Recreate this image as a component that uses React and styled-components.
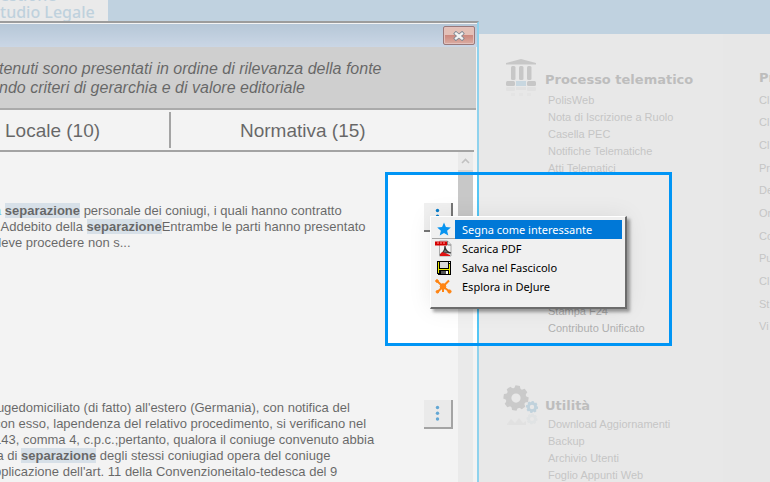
import React from "react";
import styled, { createGlobalStyle } from "styled-components";

const Global = createGlobalStyle`
  * { box-sizing: border-box; }
  body { margin: 0; overflow: hidden; font-family: "Liberation Sans", Arial, sans-serif; }
  button { font: inherit; border: 0; margin: 0; padding: 0; background: none; cursor: pointer; }
`;

const Desktop = styled.div`
  position: relative;
  min-height: 100vh;
  overflow: hidden;
  display: flex;
  flex-direction: column;
  background: #ececec;
`;

const Header = styled.header`
  height: 34px;
  flex: none;
  background: #a7c6de;
`;

const Logo = styled.div`
  width: 108px;
  height: 34px;
  overflow: hidden;
  display: flex;
  flex-direction: column;
  justify-content: flex-end;
  padding-bottom: 13px;
  background: #f0f0f0;
  color: #a5c5d9;
  font: 500 16px/17px "Noto Sans", sans-serif;
  white-space: nowrap;
`;

const Nav = styled.nav`
  flex: 1;
  display: flex;
  padding-left: 503px;
`;

const MainColumn = styled.div`
  width: 220px;
  flex: none;
  display: flex;
  flex-direction: column;
  gap: 47px;
  padding-top: 24px;
`;

const SideColumn = styled.div`
  flex: 1;
  min-width: 0;
  overflow: hidden;
  padding: 34px 0 0 36px;
  background: #eaeaea;
`;

const Section = styled.section`
  display: flex;
  align-items: flex-start;
`;

const SectionIcon = styled.svg`
  flex: none;
  width: 42px;
  height: 44px;
  overflow: visible;
`;

const SectionTitle = styled.h2`
  margin: 0;
  padding-top: ${(p) => p.$top || 0}px;
  color: #a3a3a3;
  font: bold 13px/20px "DejaVu Sans", sans-serif;
  white-space: nowrap;
`;

const Links = styled.div`
  display: flex;
  flex-direction: column;
  align-items: flex-start;
  padding-left: ${(p) => p.$indent || 0}px;
  margin-top: ${(p) => p.$gap || 0}px;
`;

const NavLink = styled.a`
  color: #b0b0b0;
  font-size: 11px;
  line-height: 17px;
  text-decoration: none;
  white-space: nowrap;
`;

const SideLinks = styled.div`
  display: grid;
  grid-auto-rows: 1fr;
  align-items: center;
  height: 249px;
  margin-top: 1px;
`;

const Window = styled.section`
  position: absolute;
  left: -6px;
  top: 21px;
  bottom: 0;
  width: 485px;
  display: flex;
  flex-direction: column;
  background: #fff;
  border-top: 2px solid #6a6a6a;
  border-right: 2px solid #53c6f5;
  overflow: hidden;
`;

const TitleBar = styled.div`
  height: 24px;
  flex: none;
  display: flex;
  justify-content: flex-end;
  padding: 2px 2px 0 0;
  border-top: 1px solid #fff;
  background: linear-gradient(#96b3cf, #b9cee8);
`;

const CloseButton = styled.button`
  width: 32px;
  height: 19px;
  display: grid;
  place-items: center;
  border: 1px solid #642d30;
  border-radius: 2px;
  box-shadow: inset 0 0 0 1px #e3aaa2;
  background: linear-gradient(#e3a898 0 45%, #bd4937 50%, #d48675);
`;

const Notice = styled.p`
  margin: 0 1px 0 0;
  padding: 12px 5px 10px;
  height: 63px;
  background: #c1c1c1;
  border-bottom: 2px solid #828282;
  color: #0d0d0d;
  font-size: 16px;
  font-style: italic;
  line-height: 19px;
  white-space: nowrap;
`;

const Tabs = styled.div`
  display: flex;
  height: 42px;
  margin-right: 3px;
  padding: 2px 0;
  border-bottom: 2px solid #767676;
`;

const Tab = styled.button`
  width: ${(p) => p.$width || "auto"};
  flex: ${(p) => (p.$width ? "none" : 1)};
  padding-left: ${(p) => p.$pad}px;
  border-right: ${(p) => (p.$width ? "2px solid #777" : "0")};
  color: #0d0d0d;
  font-size: 19px;
  line-height: 38px;
  text-align: left;
`;

const Body = styled.div`
  flex: 1;
  min-height: 0;
  display: flex;
  margin-right: 4px;
`;

const Results = styled.div`
  flex: 1;
  min-width: 0;
  padding-top: 51px;
`;

const Result = styled.article`
  display: flex;
  justify-content: space-between;
  align-items: flex-start;
  height: 197px;
  padding-right: 5px;
`;

const Excerpt = styled.p`
  margin: 0;
  color: #0d0d0d;
  font-size: 13px;
  line-height: 16px;
  white-space: nowrap;
`;

const Mark = styled.mark`
  background: #cfdeec;
  color: #0d0d0d;
  font-weight: bold;
`;

const Source = styled.span`
  color: #2ab0f0;
`;

const MoreButton = styled.button`
  width: 29px;
  height: 29px;
  flex: none;
  display: grid;
  place-items: center;
  background: #f0f0f0;
  border-right: 2px solid #777;
  border-bottom: 2px solid #777;
`;

const Scrollbar = styled.div`
  width: 15px;
  flex: none;
  background: #f0f0f0;
`;

const ScrollUp = styled.button`
  display: grid;
  place-items: center;
  width: 15px;
  height: 18px;
`;

const Thumb = styled.div`
  height: 96px;
  background: #c8c8c8;
`;

const Spotlight = styled.div`
  position: absolute;
  left: 385px;
  top: 172px;
  width: 287px;
  height: 174px;
  border: 3px solid #0095f5;
  box-shadow: 0 0 0 2000px rgba(226, 226, 226, 0.42);
  pointer-events: none;
`;

const Menu = styled.div`
  position: absolute;
  left: 430px;
  top: 216px;
  width: 197px;
  height: 93px;
  padding: 3px 3px 0 1px;
  background: #f0f0f0;
  border: 1px solid #fff;
  border-right: 2px solid #6c6c6c;
  border-bottom: 2px solid #6c6c6c;
  box-shadow: 3px 3px 3px rgba(0, 0, 0, 0.35), 0 0 22px rgba(0, 0, 0, 0.08);
`;

const MenuItem = styled.button`
  display: flex;
  align-items: center;
  width: 100%;
  height: 19px;
  color: #000;
  font: 11px/19px "Noto Sans", sans-serif;
  text-align: left;
  white-space: nowrap;
`;

const MenuIcon = styled.span`
  width: 23px;
  height: 19px;
  flex: none;
  display: grid;
  place-items: center;
  border-bottom: ${(p) => (p.$active ? "1px solid #a8a8a8" : "0")};
`;

const MenuLabel = styled.span`
  flex: 1;
  height: 19px;
  padding-left: 7px;
  background: ${(p) => (p.$active ? "#0078d7" : "transparent")};
  color: ${(p) => (p.$active ? "#fff" : "#000")};
`;

const Dots = () => (
  <svg width="5" height="17" viewBox="0 0 5 17" fill="#087dca">
    <circle cx="2.5" cy="2.5" r="1.7" />
    <circle cx="2.5" cy="8.2" r="1.7" />
    <circle cx="2.5" cy="14" r="1.7" />
  </svg>
);

const TempleShape = () => (
  <>
    <path d="M3 5.500V4L18 0l15 4v1.500z" />
    <rect x="8" y="7" width="4.500" height="14" rx="1.500" />
    <rect x="16" y="7" width="4.500" height="14" rx="1.500" />
    <rect x="24" y="7" width="4.500" height="14" rx="1.500" />
    <rect x="3" y="22" width="9" height="5" rx="1.500" />
    <rect x="24" y="22" width="9" height="5" rx="1.500" />
    <rect x="13" y="22" width="10" height="5" fill="#b5cfdf" />
  </>
);

const Temple = () => (
  <SectionIcon viewBox="0 0 42 44" fill="#b4b4b4">
    <g transform="translate(0 1)"><TempleShape /></g>
    <g opacity=".2">
      <rect x="3" y="29" width="9" height="4" rx="1" />
      <rect x="13" y="29" width="10" height="3" />
      <rect x="24" y="29" width="9" height="4" rx="1" />
      <path d="M8 35h4v3H8zM16 35h4v3h-4zM24 35h4v3h-4z" opacity=".5" />
    </g>
  </SectionIcon>
);

const Cog = ({ x, y, r, color }) => (
  <g transform={`translate(${x} ${y})`}>
    <circle r={r * 0.6} fill="none" stroke={color} strokeWidth={r * 0.46} />
    {[0, 45, 90, 135, 180, 225, 270, 315].map((a) => (
      <path
        key={a}
        transform={`rotate(${a + 8}) scale(${r / 12.5})`}
        d="M-3.300 -9L-2.200 -12.500H2.200L3.300 -9z"
        fill={color}
      />
    ))}
  </g>
);

const Gears = () => (
  <SectionIcon viewBox="0 0 42 44">
    <Cog x={13} y={14} r={12.5} color="#b8b8b8" />
    <Cog x={29} y={23} r={6} color="#a7c6d8" />
    <g opacity=".12">
      <Cog x={29} y={35} r={5.5} color="#8aa5b5" />
      <path d="M4 40l4-5 4 4 4-5 4 5 3-2v4H4z" fill="#999" />
    </g>
  </SectionIcon>
);

const Star = () => (
  <svg width="14" height="14" viewBox="0 0 14 14">
    <path d="M7 .6l1.900 4.500 4.900.4-3.700 3.200 1.200 4.800L7 10.900l-4.300 2.600 1.200-4.800L.2 5.500l4.900-.4z" fill="#0894f0" />
  </svg>
);

const Pdf = () => (
  <svg width="17" height="17" viewBox="0 0 17 17">
    <path d="M4.500 1h8l3.500 3.500V16H4.500z" fill="#f5f5f5" stroke="#999" strokeWidth=".8" />
    <path d="M12.500 1v4H16" fill="#ddd" stroke="#666" strokeWidth=".8" />
    <path d="M0 1.500h12v4H0z" fill="#d40000" />
    <path d="M2 3h2m1 0h2m1 0h2" stroke="#ff9b9b" strokeWidth="1" />
    <path d="M5 15c3-2 5-5 5-9 0 4 2 6 6 7-4-1-7-.5-11 2z" fill="#777" stroke="#333" strokeWidth="1.200" />
    <path d="M5 14.500l2-2.500 3 1 5 2v1H5z" fill="#e01010" />
  </svg>
);

const Floppy = () => (
  <svg width="14" height="14" viewBox="0 0 14 14" shapeRendering="crispEdges">
    <path d="M0 0h14v14H1l-1-1z" fill="#000" />
    <path d="M1 1h1v11H1zM12 3h1v10h-1zM2 8h10v1H2z" fill="#e8e800" />
    <path d="M3 1h8v6H3z" fill="#d8d8d8" />
    <path d="M4 10h5v3H4z" fill="#555" />
    <path d="M9 10h2v3H9z" fill="#fff" />
    <path d="M12 1h1v1h-1z" fill="#fff" />
  </svg>
);

const Network = () => (
  <svg width="17" height="15" viewBox="0 0 17 15" fill="#ff8412" stroke="#ff8412">
    <path d="M2 2l6 5.500L14 1.500M2.500 13l5.500-5.500 6.500 5M8 8v5" fill="none" strokeWidth="2" />
    <circle cx="8" cy="7.500" r="2.800" />
    <circle cx="2" cy="2" r="1.300" />
    <circle cx="2.400" cy="12.800" r="1.300" />
    <circle cx="14.500" cy="12.500" r="1.600" />
  </svg>
);

const menuEntries = [
  { label: "Segna come interessante", icon: <Star />, active: true },
  { label: "Scarica PDF", icon: <Pdf /> },
  { label: "Salva nel Fascicolo", icon: <Floppy /> },
  { label: "Esplora in DeJure", icon: <Network /> },
];

const processLinks = ["PolisWeb", "Nota di Iscrizione a Ruolo", "Casella PEC", "Notifiche Telematiche", "Atti Telematici"];
const paymentLinks = ["Stampa F24", "Contributo Unificato"];
const utilityLinks = ["Download Aggiornamenti", "Backup", "Archivio Utenti", "Foglio Appunti Web"];
const sideLinks = ["Cl", "Cl", "Cl", "Pr", "De", "Or", "Co", "Pu", "Cl", "St", "Vi"];

const LinkList = ({ items, gap }) => (
  <Links $indent={3} $gap={gap}>
    {items.map((t) => <NavLink href="#" key={t}>{t}</NavLink>)}
  </Links>
);

export default function App() {
  return (
    <Desktop>
      <Global />
      <Header>
        <Logo>
          <span>estione</span>
          <span>tudio Legale</span>
        </Logo>
      </Header>
      <Nav>
        <MainColumn>
          <Section>
            <Temple />
            <div>
              <SectionTitle $top={12}>Processo telematico</SectionTitle>
              <LinkList items={processLinks} gap={2} />
              <LinkList items={paymentLinks} gap={126} />
            </div>
          </Section>
          <Section>
            <Gears />
            <div>
              <SectionTitle $top={12}>Utilità</SectionTitle>
              <LinkList items={utilityLinks} />
            </div>
          </Section>
        </MainColumn>
        <SideColumn>
          <SectionTitle>Pr</SectionTitle>
          <SideLinks>
            {sideLinks.map((t, i) => <NavLink href="#" key={i}>{t}</NavLink>)}
          </SideLinks>
        </SideColumn>
      </Nav>

      <Window>
        <TitleBar>
          <CloseButton aria-label="Chiudi">
            <svg width="12" height="10" viewBox="0 0 12 10">
              <path d="M3 2.500l6 5M9 2.500l-6 5" stroke="#3c4a5c" strokeWidth="4" strokeLinecap="square" />
              <path d="M3 2.500l6 5M9 2.500l-6 5" stroke="#fff" strokeWidth="2.300" strokeLinecap="square" />
            </svg>
          </CloseButton>
        </TitleBar>
        <Notice>
          tenuti sono presentati in ordine di rilevanza della fonte<br />
          ndo criteri di gerarchia e di valore editoriale
        </Notice>
        <Tabs>
          <Tab $width="177px" $pad={11}>Locale (10)</Tab>
          <Tab $pad={69}>Normativa (15)</Tab>
        </Tabs>
        <Body>
          <Results>
            <Result>
              <Excerpt>
                <Source>a</Source> <Mark>separazione</Mark> personale dei coniugi, i quali hanno contratto<br />
                . Addebito della <Mark>separazione</Mark>Entrambe le parti hanno presentato<br />
                deve procedere non s...
              </Excerpt>
              <MoreButton aria-label="Altre azioni"><Dots /></MoreButton>
            </Result>
            <Result>
              <Excerpt>
                iugedomiciliato (di fatto) all'estero (Germania), con notifica del<br />
                con esso, lapendenza del relativo procedimento, si verificano nel<br />
                143, comma 4, c.p.c.;pertanto, qualora il coniuge convenuto abbia<br />
                'a di <Mark>separazione</Mark> degli stessi coniugiad opera del coniuge<br />
                pplicazione dell'art. 11 della Convenzioneitalo-tedesca del 9
              </Excerpt>
              <MoreButton aria-label="Altre azioni"><Dots /></MoreButton>
            </Result>
          </Results>
          <Scrollbar>
            <ScrollUp aria-label="Scorri in alto">
              <svg width="9" height="6" viewBox="0 0 9 6">
                <path d="M1 5l3.500-3.500L8 5" fill="none" stroke="#aaa" strokeWidth="1.600" />
              </svg>
            </ScrollUp>
            <Thumb />
          </Scrollbar>
        </Body>
      </Window>

      <Spotlight />

      <Menu role="menu">
        {menuEntries.map((m) => (
          <MenuItem role="menuitem" key={m.label}>
            <MenuIcon $active={m.active}>{m.icon}</MenuIcon>
            <MenuLabel $active={m.active}>{m.label}</MenuLabel>
          </MenuItem>
        ))}
      </Menu>
    </Desktop>
  );
}
